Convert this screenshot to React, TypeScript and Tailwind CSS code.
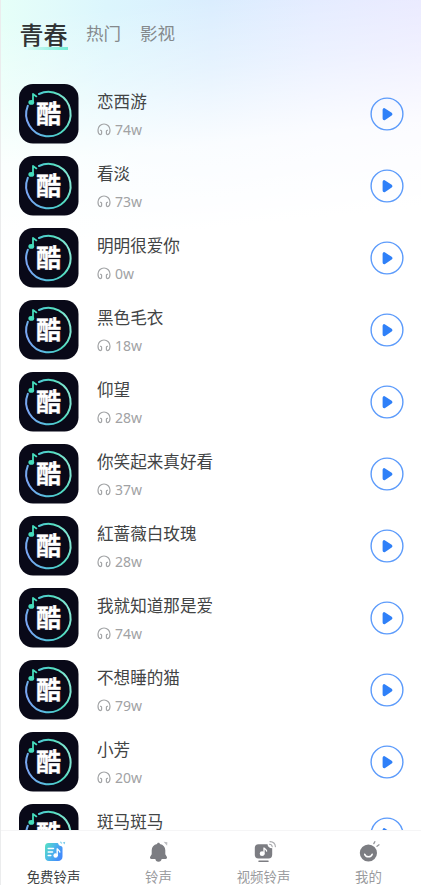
import { useState, type ReactNode } from 'react';

type Song = { title: string; plays: string };

const TABS = ['青春', '热门', '影视'];

const SONGS: Song[] = [
  { title: '恋西游', plays: '74w' },
  { title: '看淡', plays: '73w' },
  { title: '明明很爱你', plays: '0w' },
  { title: '黑色毛衣', plays: '18w' },
  { title: '仰望', plays: '28w' },
  { title: '你笑起来真好看', plays: '37w' },
  { title: '紅蔷薇白玫瑰', plays: '28w' },
  { title: '我就知道那是爱', plays: '74w' },
  { title: '不想睡的猫', plays: '79w' },
  { title: '小芳', plays: '20w' },
];

function Cover() {
  return (
    <svg className="size-[60px] shrink-0" viewBox="0 0 60 60">
      <defs>
        <linearGradient id="ring" x1="0" y1="0.6" x2="1" y2="0.3">
          <stop offset="0" stopColor="#7ba6f5" />
          <stop offset="0.35" stopColor="#4fc3d9" />
          <stop offset="0.7" stopColor="#50dcc0" />
          <stop offset="1" stopColor="#8ce9d6" />
        </linearGradient>
      </defs>
      <rect width="59.5" height="59.5" rx="14" fill="#090918" />
      <path d="M20 10A22.2 22.2 0 1 1 8.8 21.800" fill="none" stroke="url(#ring)" strokeWidth="2" strokeLinecap="round" />
      <path d="M14 18V10l3.400 2.400" fill="none" stroke="#45dcbc" strokeWidth="1.8" strokeLinejoin="round" strokeLinecap="round" />
      <ellipse cx="12.300" cy="18.4" rx="2.900" ry="2.400" fill="#45dcbc" />
      <text
        x="29.6"
        y="39.4"
        textAnchor="middle"
        fill="#ffffff"
        stroke="#ffffff"
        strokeWidth="0.3"
        className="font-['Noto_Sans_CJK_SC',sans-serif] text-[25px] font-bold"
      >
        酷
      </text>
    </svg>
  );
}

function Headphones() {
  return (
    <svg className="h-[13px] w-[14px]" viewBox="0 0 14 13" fill="none" stroke="#a3a5a7" strokeWidth="1.2">
      <path d="M2.800 11.4C1.600 10.800 1 9.200 1 7a6 6 0 0 1 12 0c0 2.200-.6 3.800-1.800 4.400" strokeLinecap="round" />
      <path d="M2.800 11.500c1.200.2 1.800-.2 1.800-1.200V8.200c0-.8-.7-1-1.500-.8M11.200 11.500c-1.200.2-1.800-.2-1.800-1.200V8.200c0-.8.7-1 1.500-.8" />
    </svg>
  );
}

function PlayButton() {
  return (
    <button type="button" className="size-[34px] shrink-0">
      <svg viewBox="0 0 34 34" className="size-full">
        <circle cx="17" cy="17" r="15.900" fill="none" stroke="#5c9bfb" strokeWidth="1.400" />
        <path d="M14.200 12.800v8.800l6.600-4.400z" fill="#2f80f8" stroke="#2f80f8" strokeWidth="3.200" strokeLinejoin="round" />
      </svg>
    </button>
  );
}

function SongRow({ title, plays }: Song) {
  return (
    <div className="flex h-[60px] shrink-0 items-center">
      <Cover />
      <div className="ml-[18px] flex flex-1 flex-col">
        <span className="mt-px text-[16.600px] leading-6 text-[#424445]">{title}</span>
        <span className="mt-1.5 flex h-5 items-center gap-[4px] font-['Noto_Sans',sans-serif] text-[14px] text-[#a1a2a4]">
          <Headphones />
          {plays}
        </span>
      </div>
      <PlayButton />
    </div>
  );
}

// Last row, only its top shows above the nav bar
function PeekRow({ title }: { title: string }) {
  return (
    <div className="flex h-[26px] shrink-0 items-start overflow-hidden">
      <Cover />
      <span className="mt-[6px] ml-[18px] flex-1 text-[16.600px] leading-6 text-[#424445]">{title}</span>
      <div className="mt-[13px]">
        <PlayButton />
      </div>
    </div>
  );
}

function FreeIcon() {
  return (
    <svg className="h-6 w-7" viewBox="0 0 28 24">
      <defs>
        <linearGradient id="free" x1="0" y1="0" x2="1" y2="0.5">
          <stop offset="0" stopColor="#57e2c2" />
          <stop offset="0.5" stopColor="#4db8e8" />
          <stop offset="1" stopColor="#438cfb" />
        </linearGradient>
      </defs>
      <path d="M8.500 3H17c1 0 1.300.5 1.600 1.500.4 1 1.200 1.300 2.100 1.500 1.200.3 1.800.8 1.800 2v8.500c0 2.800-1.700 4.500-4.500 4.500H9c-2.800 0-4-1.700-4-4.500V7c0-2.500 1-4 3.500-4z" fill="url(#free)" />
      <path d="M8.200 8.500h5.300M8.200 12h4.300M8.200 15.500h2.600" stroke="#fff" strokeWidth="1.500" strokeLinecap="round" />
      <path d="M17.200 15.500V8.500c.3 1.600 2.400 1.400 2.600 3.500" fill="none" stroke="#fff" strokeWidth="1.400" strokeLinecap="round" />
      <circle cx="15.600" cy="15.500" r="2.200" fill="#fff" />
      <path d="M20.300 1.800l1.600 1.700" stroke="#9adcf0" strokeWidth="1.300" />
      <path d="M22.800 2.400l2.400-.6-.6 2.600z" fill="#78cbe9" />
    </svg>
  );
}

function BellIcon() {
  return (
    <svg className="h-6 w-7" viewBox="0 0 28 24" fill="#7c7d82">
      <path d="M13.500 2.800c.8 0 1.300.5 1.400 1.200 3.400.7 5.400 3.200 5.400 6.300v4l1.500 2.500c.6 1-.1 2.100-1.100 2.100H6.300c-1 0-1.700-1.100-1.100-2.100l1.500-2.500v-4c0-3.100 2-5.600 5.400-6.300.1-.7.600-1.200 1.400-1.200z" />
      <path d="M10.300 18.800h6.400c-.2 1.900-1.300 2.900-3.200 2.900s-3-1-3.200-2.900z" />
      <path d="M18.600 1.800l3.800.4-.3 3.600z" fill="#bcbdc0" />
    </svg>
  );
}

function VideoIcon() {
  return (
    <svg className="h-6 w-7" viewBox="0 0 28 24">
      <path d="M8.500 4.300h9c.3 2.500 1.600 3.800 4.700 4v6.200c0 2.500-1.200 4-3.700 4h-10c-2.500 0-3.700-1.500-3.700-4V8.300c0-2.500 1.200-4 3.700-4z" fill="#7c7d82" />
      <path d="M9 21.200h9" stroke="#7c7d82" strokeWidth="1.500" strokeLinecap="round" />
      <path d="M14 14V7.500c.3 1.600 2.400 1.400 2.600 3.500" fill="none" stroke="#fff" strokeWidth="1.300" strokeLinecap="round" />
      <circle cx="12.100" cy="13.700" r="2.400" fill="#fff" />
      <path d="M19.500 4.300c1.600.1 2.500 1 2.700 2.500M20 1.600c3.300.1 5.200 2 5.400 5" fill="none" stroke="#a9aaad" strokeWidth="1.100" strokeLinecap="round" />
    </svg>
  );
}

function MineIcon() {
  return (
    <svg className="h-6 w-7" viewBox="0 0 28 24">
      <circle cx="13.400" cy="13" r="8.600" fill="#7c7d82" />
      <path d="M9.700 14.300c.9 3.400 6.600 3.400 7.500 0" fill="none" stroke="#fff" strokeWidth="1.500" strokeLinecap="round" />
      <path d="M18.800 3.600l1-1.900M22 6.300l2-1.500" stroke="#96979b" strokeWidth="1.300" strokeLinecap="round" />
    </svg>
  );
}

const NAV: { label: string; icon: ReactNode }[] = [
  { label: '免费铃声', icon: <FreeIcon /> },
  { label: '铃声', icon: <BellIcon /> },
  { label: '视频铃声', icon: <VideoIcon /> },
  { label: '我的', icon: <MineIcon /> },
];

export default function App() {
  const [tab, setTab] = useState(0);
  const [page, setPage] = useState(0);

  return (
    <div className="flex h-[885px] w-[421px] flex-col overflow-hidden border-l border-[#ebeced] bg-[linear-gradient(174deg,transparent_20px,rgba(255,255,255,0.35)_90px,rgba(255,255,255,0.85)_165px,#fff_250px),linear-gradient(to_right,#e6fff8,#dcf6fd_25%,#daedfe_50%,#e3ebff_75%,#e8e8ff)] font-['Noto_Sans','Noto_Sans_CJK_SC',sans-serif]">
      <header className="flex h-[84px] shrink-0 items-start pl-[18.500px] pt-[18px]">
        {TABS.map((name, i) =>
          i === tab ? (
            <button
              key={name}
              type="button"
              className="mr-[18.500px] bg-[linear-gradient(to_right,transparent,#70ecd5)] bg-[length:45px_3px] bg-[position:3px_29px] bg-no-repeat text-[24px] leading-[34px] font-medium text-[#303435]"
            >
              {name}
            </button>
          ) : (
            <button key={name} type="button" onClick={() => setTab(i)} className="mr-[19px] text-[17.500px] leading-[30px] text-[#85898c]">
              {name}
            </button>
          ),
        )}
      </header>

      <main className="flex min-h-0 flex-1 flex-col gap-[12.040px] pr-[17px] pl-[18px]">
        {SONGS.map((song) => (
          <SongRow key={song.title} {...song} />
        ))}
        <PeekRow title="斑马斑马" />
      </main>

      <nav className="grid h-[55px] shrink-0 grid-cols-4 border-t border-[#f5f5f6] bg-white">
        {NAV.map((item, i) => (
          <button key={item.label} type="button" onClick={() => setPage(i)} className="flex flex-col items-center pt-[9px]">
            {item.icon}
            <span className={`mt-[3px] text-[13.400px] leading-5 ${i === page ? 'text-[#3d3f42]' : 'text-[#9a9b9e]'}`}>{item.label}</span>
          </button>
        ))}
      </nav>
    </div>
  );
}
